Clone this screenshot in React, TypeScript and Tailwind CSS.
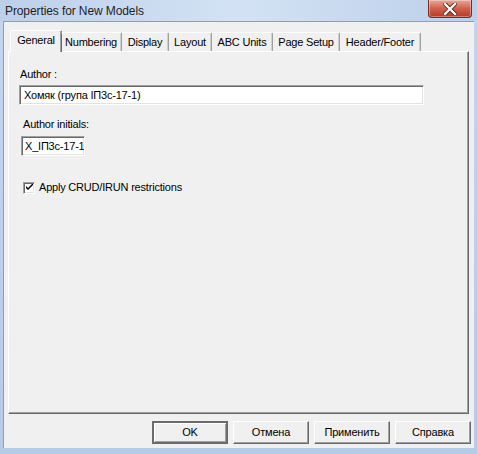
import React from "react";

const tabs = [
  { label: "Numbering", w: "w-[61px]" },
  { label: "Display", w: "w-[47px]" },
  { label: "Layout", w: "w-[43px]" },
  { label: "ABC Units", w: "w-[61px]" },
  { label: "Page Setup", w: "w-[67px]" },
  { label: "Header/Footer", w: "w-[81px]" },
];

const buttons = ["OK", "Отмена", "Применить", "Справка"];

const font = { fontFamily: '"Liberation Sans", Arial, sans-serif' };

const App = () => {
  return (
    <div
      className="w-[477px] h-[454px] flex flex-col bg-gradient-to-b from-[#c3d6ee] to-[#b6cbe6] text-black overflow-hidden"
      style={font}
    >
      {/* title bar */}
      <div className="h-[21px] flex justify-between bg-gradient-to-r from-[#bcd0ea] via-[#d3e2f4] to-[#bcd0ea]">
        <div className="pl-[5px] pt-[4px] text-[12px] leading-[14px] text-[#1e1e1e] tracking-[-0.1px]">
          Properties for New Models
        </div>
        <div className="mr-[5px] w-[44px] h-[18px] rounded-b-[4px] border border-t-0 border-[#7a2a20] bg-gradient-to-b from-[#e8a699] via-[#d0604c] to-[#b83a24] flex items-center justify-center shadow-[inset_0_0_0_1px_rgba(255,255,255,0.35)]">
          <svg width="14" height="12" viewBox="0 0 14 12">
            <path d="M2 1 L12 11 M12 1 L2 11" stroke="#5a1a10" strokeWidth="4" strokeLinecap="square" />
            <path d="M2 1 L12 11 M12 1 L2 11" stroke="#ffffff" strokeWidth="2.4" strokeLinecap="square" />
          </svg>
        </div>
      </div>

      {/* client */}
      <div className="flex-1 mx-[3px] mb-[6px] bg-[#f0f0f0] border-t border-l border-[#8a9fb8] flex flex-col text-[11px] tracking-[-0.2px]">
        <div className="flex-1 flex flex-col pt-[8px] pl-[4px] pr-[5px]">
          {/* tabs */}
          <div className="flex items-end h-[22px] relative z-10 pl-[2px]">
            <div className="w-[52px] h-[22px] -mr-[1px] bg-[#f0f0f0] border-t border-l border-white border-r border-r-[#696969] shadow-[inset_-1px_0_0_#a0a0a0] rounded-t-[2px] flex items-start justify-center pt-[3px] leading-[13px]">
              General
            </div>
            {tabs.map((t) => (
              <div
                key={t.label}
                className={`${t.w} h-[19px] mb-[1px] border-t border-white border-r border-r-[#a0a0a0] shadow-[inset_-1px_0_0_#cfcfcf] rounded-t-[2px] flex items-start justify-center pt-[3px] leading-[13px]`}
              >
                {t.label}
              </div>
            ))}
          </div>

          {/* panel */}
          <div className="flex-1 -mt-[1px] border-t border-l border-white border-r border-b border-r-[#696969] border-b-[#696969] shadow-[inset_-1px_-1px_0_#a0a0a0] flex flex-col pl-[10px]">
            <div className="ml-[1px] mt-[16px] leading-[13px]">Author :</div>
            <div className="mt-[4px] w-[405px] h-[20px] bg-white border border-t-[#a0a0a0] border-l-[#a0a0a0] border-b-white border-r-white shadow-[inset_1px_1px_0_#696969,inset_-1px_-1px_0_#e3e3e3] pl-[4px] flex items-center leading-[13px]">
              Хомяк (група ІП3с-17-1)
            </div>

            <div className="ml-[4px] mt-[13px] leading-[13px]">Author initials:</div>
            <div className="ml-[2px] mt-[5px] w-[64px] h-[20px] bg-white border border-t-[#a0a0a0] border-l-[#a0a0a0] border-b-white border-r-white shadow-[inset_1px_1px_0_#696969,inset_-1px_-1px_0_#e3e3e3] pl-[3px] flex items-center leading-[13px] overflow-hidden whitespace-nowrap">
              X_ІП3с-17-1
            </div>

            <div className="ml-[4px] mt-[25px] flex items-center gap-[4px]">
              <div className="w-[12px] h-[12px] bg-white border border-t-[#a0a0a0] border-l-[#a0a0a0] border-b-white border-r-white shadow-[inset_1px_1px_0_#696969,inset_-1px_-1px_0_#e3e3e3] flex items-center justify-center">
                <svg width="7" height="7" viewBox="0 0 7 7">
                  <path d="M0 2 L0 4 L2 6 L7 1 L7 -1 L2 4 Z" fill="#000" />
                </svg>
              </div>
              <span className="leading-[13px]">Apply CRUD/IRUN restrictions</span>
            </div>
          </div>
        </div>

        {/* buttons */}
        <div className="h-[23px] mt-[7px] mb-[4px] pr-[3px] flex justify-end gap-[5px]">
          {buttons.map((b, i) => (
            <div
              key={b}
              className={`w-[76px] h-[23px] flex items-center justify-center leading-[13px] bg-[#f0f0f0] ${
                i === 0
                  ? "border-2 border-[#6b6b6b] shadow-[inset_1px_1px_0_#ffffff,inset_-1px_-1px_0_#a0a0a0]"
                  : "border border-t-white border-l-white border-r-[#696969] border-b-[#696969] shadow-[inset_-1px_-1px_0_#a0a0a0]"
              }`}
            >
              {b}
            </div>
          ))}
        </div>
      </div>
    </div>
  );
};

export default App;
